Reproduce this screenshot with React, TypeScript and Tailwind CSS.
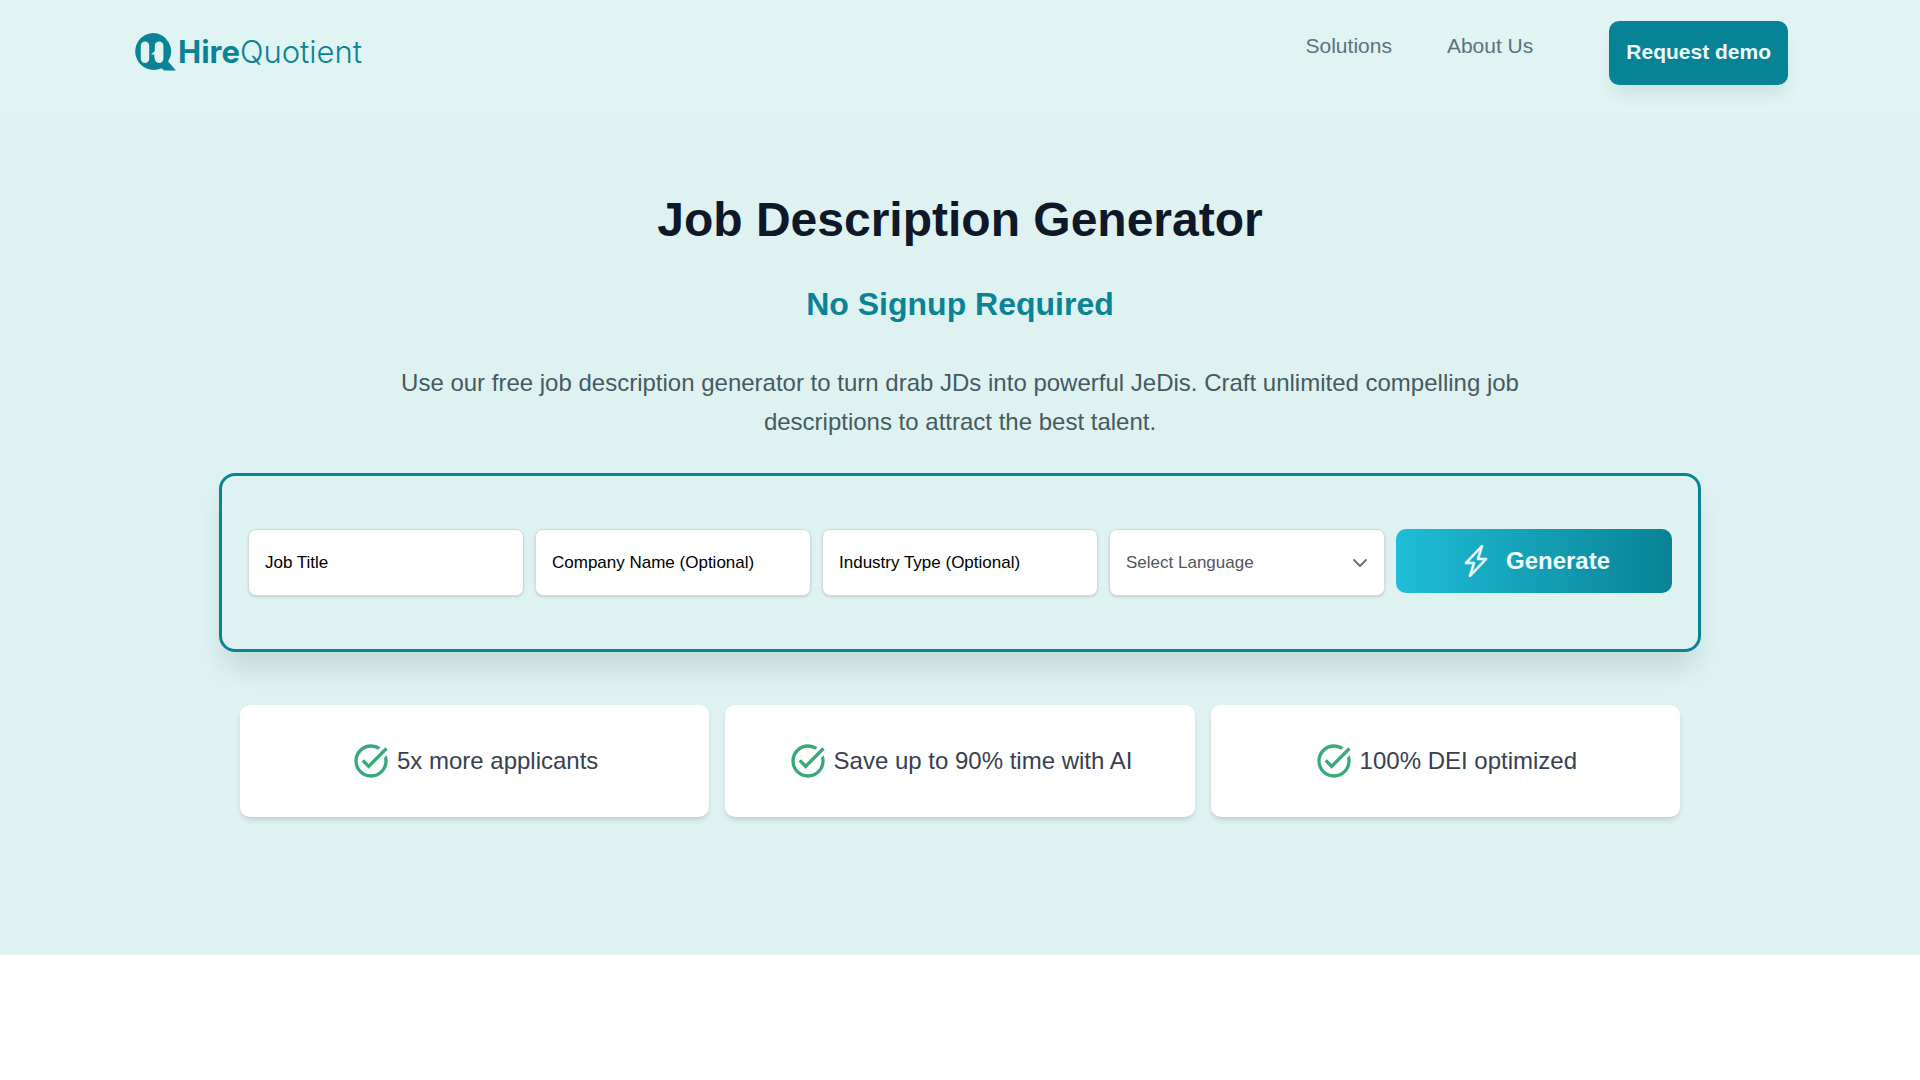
import { ChevronDown } from 'lucide-react';
import { BsLightningCharge } from 'react-icons/bs';
import { MdTaskAlt } from 'react-icons/md';

const textFields = [
  { name: 'jobTitle', label: 'Job Title' },
  { name: 'companyName', label: 'Company Name (Optional)' },
  { name: 'industryType', label: 'Industry Type (Optional)' },
];

const benefits = [
  '5x more applicants',
  'Save up to 90% time with AI',
  '100% DEI optimized',
];

const Logo = () => (
  <a href="#" className="flex items-center text-[#0a8396]">
    <svg viewBox="0 0 42 38" className="h-[38px] w-[42px]" aria-hidden="true">
      <path
        fill="currentColor"
        d="M18.5 0a18.5 18.5 0 0 1 15.6 28.5L42 37.6H30.2l-2.6-2.4A18.5 18.5 0 1 1 18.5 0Z"
      />
      <rect x="6.8" y="8.4" width="8.4" height="21.6" rx="4.2" fill="#dff4f3" />
      <rect x="20.8" y="8.4" width="8.6" height="21.6" rx="4.2" fill="#dff4f3" />
      <path fill="#dff4f3" d="m22 17-5 4.4h3.4V25H22z" />
    </svg>
    <span className="ml-[2px] font-['Inter',sans-serif] text-[31px] leading-9">
      <span className="font-bold">Hire</span>
      <span className="font-light">Quotient</span>
    </span>
  </a>
);

const Header = () => (
  <header className="bg-[#dff4f3] pt-[21px] pr-[132px] pb-[27px] pl-[134px]">
    <div className="flex items-start justify-between">
      <div className="pt-3">
        <Logo />
      </div>
      <nav className="flex items-start text-[21px] leading-7 text-[#5b7280]">
        <a href="#" className="mr-[55px] py-[11px]">
          Solutions
        </a>
        <a href="#" className="mr-[76px] py-[11px]">
          About Us
        </a>
        <button
          type="button"
          className="rounded-[10px] bg-[#088395] px-[17px] pt-[17px] pb-[19px] font-bold text-[#effcfd] shadow-[0_12px_18px_-3px_rgba(0,0,0,0.08)]"
        >
          Request demo
        </button>
      </nav>
    </div>
  </header>
);

const GeneratorForm = () => (
  <form
    className="mx-auto mt-8 grid max-w-[1482px] grid-cols-5 items-start gap-[11px] rounded-2xl border-3 border-[#0a8396] px-[26px] py-[53px] text-[17px] shadow-[0_20px_30px_-6px_rgba(0,0,0,0.12)]"
    onSubmit={(e) => e.preventDefault()}
  >
    {textFields.map((field) => (
      <input
        key={field.name}
        type="text"
        name={field.name}
        aria-label={field.label}
        placeholder={field.label}
        className="h-[67px] w-full min-w-0 rounded-lg border border-[#cfdcdd] bg-white px-4 text-black shadow-sm placeholder:text-black"
      />
    ))}
    <div className="relative">
      <select
        name="language"
        aria-label="Select Language"
        className="h-[67px] w-full appearance-none rounded-lg border border-[#cfdcdd] bg-white px-4 text-[#52565f] shadow-sm"
      >
        <option>Select Language</option>
      </select>
      <ChevronDown className="pointer-events-none absolute inset-y-0 right-[13px] my-auto size-6 text-[#6b7280]" />
    </div>
    <button
      type="submit"
      className="flex h-16 items-center justify-center gap-[14px] rounded-[10px] bg-linear-to-r from-[#1fbdd8] to-[#088395] pl-[2px] text-2xl font-bold text-[#effcfd]"
    >
      <BsLightningCharge className="size-8 stroke-[0.3]" />
      Generate
    </button>
  </form>
);

const Benefits = () => (
  <ul className="mx-auto mt-[53px] grid max-w-[1440px] grid-cols-3 gap-4">
    {benefits.map((benefit) => (
      <li
        key={benefit}
        className="flex h-28 items-center justify-center gap-[6px] rounded-[10px] bg-white text-2xl text-[#374151] shadow-md"
      >
        <MdTaskAlt className="size-10 text-[#38a978]" />
        {benefit}
      </li>
    ))}
  </ul>
);

export default function App() {
  return (
    <div className="min-h-screen bg-white font-['Liberation_Sans',Arial,sans-serif]">
      <Header />
      <main className="bg-[#def2f1] px-8 pt-[78px] pb-[138px]">
        <div className="text-center">
          <h1 className="text-5xl leading-[60px] font-bold text-[#0f1828]">
            Job Description Generator
          </h1>
          <h2 className="mt-[34px] text-[32px] leading-10 font-bold text-[#0a8396]">
            No Signup Required
          </h2>
          <p className="mx-auto mt-[39px] max-w-6xl text-2xl leading-[39px] text-[#465a62]">
            Use our free job description generator to turn drab JDs into
            powerful JeDis. Craft unlimited compelling job descriptions to
            attract the best talent.
          </p>
        </div>
        <GeneratorForm />
        <Benefits />
      </main>
    </div>
  );
}
